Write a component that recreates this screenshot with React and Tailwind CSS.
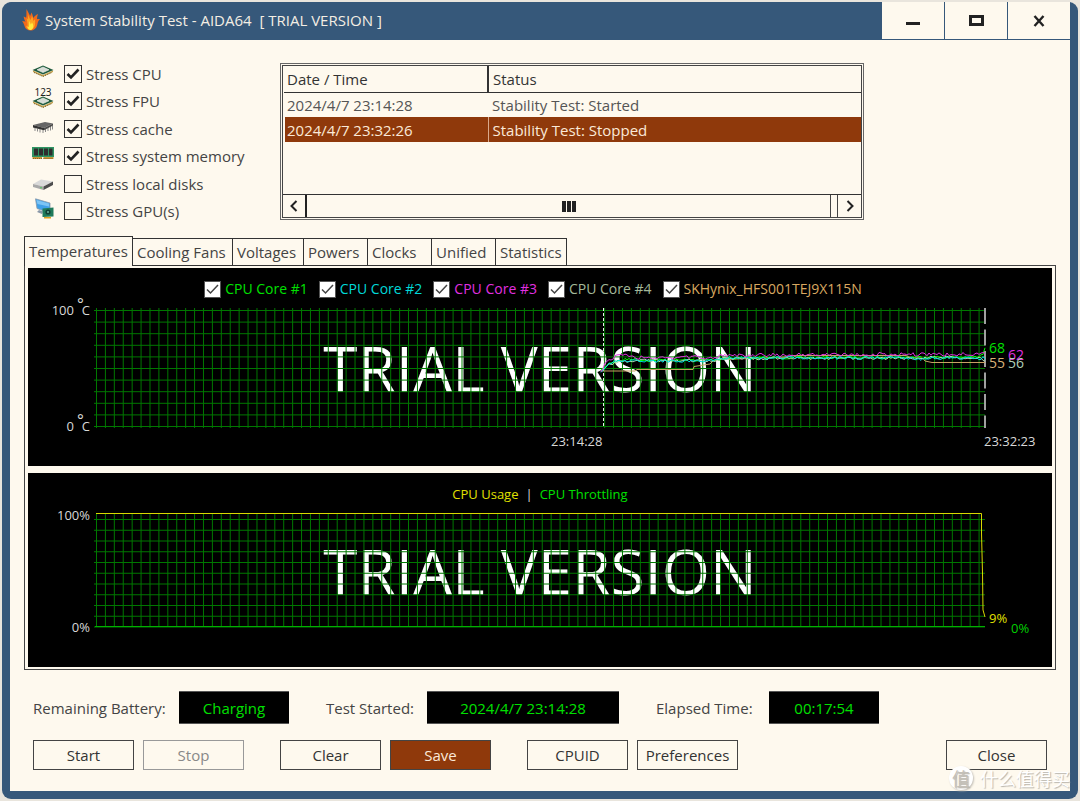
import React, { useState } from 'react';

const stressTests = [
  { id: 'cpu', label: 'Stress CPU', icon: 'cpu', checked: true },
  { id: 'fpu', label: 'Stress FPU', icon: 'fpu', checked: true },
  { id: 'cache', label: 'Stress cache', icon: 'cache', checked: true },
  { id: 'memory', label: 'Stress system memory', icon: 'memory', checked: true },
  { id: 'disks', label: 'Stress local disks', icon: 'disk', checked: false },
  { id: 'gpu', label: 'Stress GPU(s)', icon: 'gpu', checked: false },
];

const events = [
  { time: '2024/4/7 23:14:28', status: 'Stability Test: Started' },
  { time: '2024/4/7 23:32:26', status: 'Stability Test: Stopped' },
];

const tabs = [
  { name: 'Temperatures', width: 'w-[109px]' },
  { name: 'Cooling Fans', width: 'w-[100px]' },
  { name: 'Voltages', width: 'w-[71px]' },
  { name: 'Powers', width: 'w-[64px]' },
  { name: 'Clocks', width: 'w-[64px]' },
  { name: 'Unified', width: 'w-[64px]' },
  { name: 'Statistics', width: 'w-[71px]' },
];

const sensors = [
  { id: 'core1', label: 'CPU Core #1', color: 'text-[#00e000]' },
  { id: 'core2', label: 'CPU Core #2', color: 'text-[#00d8d8]' },
  { id: 'core3', label: 'CPU Core #3', color: 'text-[#e030e0]' },
  { id: 'core4', label: 'CPU Core #4', color: 'text-[#a3b899]' },
  { id: 'ssd', label: 'SKHynix_HFS001TEJ9X115N', color: 'text-[#d8a860]' },
];

// Plot space is 892 x 120, 100 degrees at y = 2.5 and 0 degrees at y = 118.5
const traces = [
  {
    color: '#c8a064', amp: 0, seed: 1,
    points: [[507, 63], [541, 63], [543, 61.5], [599, 61.5], [600, 58.5], [616, 56], [619, 53], [624, 51.5], [656, 50.5], [690, 49], [699, 47.5], [812, 47.5], [815, 49], [829, 50.5], [831, 53], [838, 54.5], [891, 54.5]],
  },
  {
    color: '#00ff00', amp: 1.4, seed: 7,
    points: [[507, 62], [515, 55], [525, 53], [536, 50.5], [546, 52], [622, 52], [630, 50], [885, 49], [889, 46], [891, 40]],
  },
  {
    color: '#a8d8b0', amp: 1.5, seed: 23,
    points: [[507, 65], [514, 56], [525, 54], [545, 52.5], [622, 52.5], [630, 50.5], [887, 49.5], [891, 53]],
  },
  {
    color: '#00e0e0', amp: 1.5, seed: 41,
    points: [[507, 63], [514, 56], [525, 53], [545, 53], [622, 52.5], [630, 50], [820, 50], [824, 52], [830, 50], [891, 50]],
  },
  {
    color: '#e030e0', amp: 2, seed: 59,
    points: [[507, 62], [511, 57], [516, 52], [522, 49], [532, 46], [544, 49.5], [622, 49.5], [630, 47], [891, 46]],
  },
];

const buildPath = ({ points, amp, seed }) => {
  if (!amp) {
    return points.map(([x, y], i) => `${i ? 'L' : 'M'}${x} ${y}`).join(' ');
  }
  let state = seed;
  const noise = () => {
    state = (state * 16807) % 2147483647;
    return (state / 2147483647) * 2 - 1;
  };
  for (let i = 0; i < 5; i++) noise();
  const last = points[points.length - 1];
  const out = [];
  for (let x = points[0][0]; x <= last[0]; x += 2) {
    const i = Math.max(1, points.findIndex((p) => p[0] >= x));
    const [x0, y0] = points[i - 1];
    const [x1, y1] = points[i];
    const y = y0 + ((y1 - y0) * (x - x0)) / (x1 - x0) + noise() * amp;
    out.push(`${out.length ? 'L' : 'M'}${x} ${y.toFixed(1)}`);
  }
  return out.join(' ');
};

const FlameIcon = () => (
  <svg className="w-[18px] h-[22px]" viewBox="0 0 18 22">
    <path fill="#f26a1b" d="M4.500 0c1.300 2.600 2.600 4.600 3.600 7C8.600 5.800 9 4.800 9.400 3.600 10.400 5.200 11 7 11.200 9c1.300-1.600 2.600-3 4.800-4-.8 2.200-.9 3.600-1 5.200.9-.2 1.900-.2 3 0-2.200 1.600-2.200 3.800-2.800 6-.9 3.200-3.400 5.300-6.400 5.300-3.300 0-5.600-1.600-6.300-4.500C2 15 1.400 13.500 0 12.200c1.400-.1 2.400 0 3.500.5C2.500 11 1.800 9.300 1.600 7.500c1 .3 1.700.7 2.500 1.300C4.800 6 4.200 3 4.500 0z" />
    <path fill="#ffa51f" d="M6 5c.6 2.500 1.600 4 2.400 6 .8-1.200 1.200-2.500 1.600-4 1 1.800 1 3.500 1.200 5 .8-.6 1.300-1.300 2-2-.2 2.500.3 4.500-.4 6.500-.7 2.600-2.300 4-4.300 4.200C6 20.800 4.300 19 4 16.500c.6.300 1 .5 1.500 1C6 14 4.800 11 4.600 9c.6.500 1 1 1.400 1.600C6.200 8.500 5.800 7 6 5z" />
    <path fill="#ffe83d" d="M7.500 12c.6 1.200.8 2.300 1.200 3.400.6-.6 1-1.300 1.200-2.200.8 1.500 1.600 2.600 1.400 4.300-.2 1.800-1.300 3.500-2.800 3.500-1.700 0-3-1.800-3-3.500.3.200.9.400 1.300.8.500-2 .200-4 .7-6.300z" />
  </svg>
);

const Chip = () => (
  <>
    <path fill="#c9a24a" d="M1 9.500 11 14l10-4.500V11l-10 4.500L1 11z" />
    <path stroke="#6b5a2a" strokeWidth="1" strokeDasharray="1 1" d="M2 11.500 11 15.500l9-4" fill="none" />
    <path fill="#1f5a3c" d="M11 4.500 21.500 9 11 13.500.5 9z" />
    <path fill="#d7dcd6" stroke="#f4f6f2" strokeWidth=".6" d="M11 6 17 8.800 11 11.500 5 8.800z" />
  </>
);

const DeviceIcon = ({ kind }) => {
  if (kind === 'fpu') {
    return (
      <svg className="w-[22px] h-[28px] shrink-0" viewBox="0 -7 22 28">
        <Chip />
        <text x="11" y="4" textAnchor="middle" fontSize="10" fontFamily="Noto Sans, sans-serif" fill="#222">123</text>
      </svg>
    );
  }
  return (
    <svg className="w-[22px] h-[22px] shrink-0" viewBox="0 0 22 22">
      {kind === 'cpu' && <Chip />}
      {kind === 'cache' && (
        <>
          <path stroke="#8a8a8a" strokeWidth="1" fill="none" d="M3 12v3M5.500 12.500v3M8 13v3.500M11 13v4M13.500 12v4M16 11v4M18.500 10v4.500M20.500 9.500v4" />
          <path fill="#666" d="M1 9 13 6l8 1.500-9 4.500z" />
          <path fill="#333" d="M1 9l11 3v2.200L1 11.500z" />
          <path fill="#4c4c4c" d="M12 12l9-4.500v2L12 14.200z" />
        </>
      )}
      {kind === 'memory' && (
        <>
          <rect x="0" y="4" width="22" height="10" fill="#2f9463" />
          <path fill="#2e2e2e" d="M2 5.500h4v7H2zM7 5.500h4v7H7zM12 5.500h4v7h-4zM17 5.500h3.500v7H17z" />
          <path fill="#c8973a" d="M.5 14H10v2H.5zM11.500 14H21.500v2h-10z" />
          <path stroke="#8a6420" strokeWidth="1" strokeDasharray="1 1" d="M1 15.500h9M11.500 15.500H21" />
        </>
      )}
      {kind === 'disk' && (
        <>
          <path fill="#d9d9d9" d="M1 13 9 8.500l12 2-9.500 5z" />
          <path fill="#a8a8a8" d="M1 13l10.500 2.500v3.500L1 16z" />
          <path fill="#4d4d4d" d="M11.500 15.500 21 10.500V14l-9.500 5z" />
          <circle cx="9" cy="16.800" r="0.800" fill="#3fd04a" />
        </>
      )}
      {kind === 'gpu' && (
        <>
          <path fill="#3fa0e8" stroke="#8a98a8" strokeWidth=".8" d="M3.500.8 18 5v10L5 10.500z" />
          <path fill="#7cc4f5" d="M4.500 2 17 5.600v3L5.500 6z" />
          <path fill="#8a98a8" d="m7 12 4 1.500-1 2.500-5-2z" />
          <path fill="#1f7a5a" d="M10.500 10.500 21.500 9.500v9l-11 .5z" />
          <circle cx="16" cy="14" r="2.600" fill="#123f34" />
          <circle cx="16" cy="14" r="1" fill="#6fb59c" />
          <path fill="#e0a020" d="M12 19h7v1.500h-7z" />
        </>
      )}
    </svg>
  );
};

const StressOption = ({ test }) => (
  <label htmlFor={test.id} className="flex items-center">
    <span className="mb-1 h-[22px] flex items-center">
      <DeviceIcon kind={test.icon} />
    </span>
    <span className="ml-[10px] mr-1 grid">
      <input
        id={test.id}
        type="checkbox"
        defaultChecked={test.checked}
        className="peer appearance-none [grid-area:1/1] w-[18px] h-[18px] border border-[#333]"
      />
      <svg className="[grid-area:1/1] w-[18px] h-[18px] hidden peer-checked:block pointer-events-none" viewBox="0 0 18 18">
        <path d="M3.500 9 7 12.500l7.500-8" fill="none" stroke="#222" strokeWidth="2.600" />
      </svg>
    </span>
    {test.label}
  </label>
);

const EventLog = () => (
  <div className="w-[584px] h-[157px] border border-[#666] p-px text-[#444]">
    <div className="h-full flex flex-col border border-[#444]">
      <table className="w-full table-fixed border-collapse">
        <thead>
          <tr className="h-[26px] border-b border-[#333] text-[#333]">
            <th className="w-[204px] border-r-2 border-[#333] pl-[3px] text-left font-normal">Date / Time</th>
            <th className="pl-1 text-left font-normal">Status</th>
          </tr>
        </thead>
        <tbody>
          {events.map((event, i) => (
            <tr key={event.time} className={i === 1 ? 'h-[25px] bg-[#8f390b] text-[#fbe9d8]' : 'h-[25px] text-[#555]'}>
              <td className={i === 1 ? 'border-r border-[#d9a98c] border-l-2 border-l-[#fef9ee] pl-[2px]' : 'pl-[3px]'}>{event.time}</td>
              <td className="pl-1">{event.status}</td>
            </tr>
          ))}
        </tbody>
      </table>
      <div className="mt-auto h-[23px] flex border-t border-[#333]">
        <button aria-label="Scroll left" className="w-6 flex items-center justify-center border-r-2 border-[#222]">
          <svg className="w-3 h-3" viewBox="0 0 12 12">
            <path d="M8.500 1 3.500 6l5 5" fill="none" stroke="#222" strokeWidth="2" />
          </svg>
        </button>
        <div className="flex-1 mr-[6px] flex items-center justify-center gap-px border-r border-[#444]">
          <span className="w-1 h-[11px] bg-[#222]" />
          <span className="w-1 h-[11px] bg-[#222]" />
          <span className="w-1 h-[11px] bg-[#222]" />
        </div>
        <button aria-label="Scroll right" className="w-6 flex items-center justify-center border-l border-[#444]">
          <svg className="w-3 h-3" viewBox="0 0 12 12">
            <path d="m3.500 1 5 5-5 5" fill="none" stroke="#222" strokeWidth="2" />
          </svg>
        </button>
      </div>
    </div>
  </div>
);

const GridLines = ({ height, top, rowStep, bottom }) => {
  const columns = Array.from({ length: 100 }, (_, i) => 2.5 + i * 8.915);
  const rows = Array.from({ length: 11 }, (_, i) => top + i * rowStep);
  return (
    <g stroke="#007800" strokeWidth="1">
      {columns.map((x) => <path key={x} d={`M${x} 0V${bottom || height}`} />)}
      {rows.map((y) => <path key={y} d={`M0 ${y}H891`} />)}
    </g>
  );
};

const Watermark = () => (
  <span className="absolute inset-0 flex items-center justify-center whitespace-nowrap text-[62px] text-white">
    TRIAL VERSION
  </span>
);

const Degrees = ({ value }) => (
  <span className="h-1 flex items-center">
    {value}
    <span className="ml-[3px] -mr-[2px] mb-3 text-[16px]">°</span>
    C
  </span>
);

const TemperatureChart = () => (
  <section className="bg-black text-[13px] leading-5 text-[#d8d8d8]">
    <div className="h-10 pt-[2px] pr-[14px] flex items-center justify-center gap-[11px] text-[14px]">
      {sensors.map((sensor) => (
        <label key={sensor.id} htmlFor={sensor.id} className={`flex items-center gap-1 ${sensor.color}`}>
          <span className="grid">
            <input
              id={sensor.id}
              type="checkbox"
              defaultChecked
              className="peer appearance-none [grid-area:1/1] w-[17px] h-[17px] bg-white border border-[#555]"
            />
            <svg className="[grid-area:1/1] w-[17px] h-[17px] hidden peer-checked:block pointer-events-none" viewBox="0 0 17 17">
              <path d="M3 8.500 6.500 12l7.500-8" fill="none" stroke="#444" strokeWidth="1.500" />
            </svg>
          </span>
          {sensor.label}
        </label>
      ))}
    </div>
    <div className="grid grid-cols-[66px_1fr_66px]">
      <div className="pr-1 flex flex-col items-end justify-between">
        <Degrees value={100} />
        <Degrees value={0} />
      </div>
      <div className="relative h-[120px]">
        <Watermark />
        <svg className="relative block w-full h-full" viewBox="0 0 892 120" preserveAspectRatio="none">
          <GridLines height={120} top={2.5} rowStep={11.6} />
          <path d="M509.500 0V118" stroke="#e8f0e8" strokeDasharray="3 2" />
          <path d="M891 0V120" stroke="#a0a0a0" strokeWidth="2" strokeDasharray="16 5.500" />
          {traces.map((trace) => (
            <path key={trace.color} d={buildPath(trace)} fill="none" stroke={trace.color} strokeWidth="1" />
          ))}
        </svg>
      </div>
      <div className="relative text-[14px] leading-none">
        <span className="absolute left-[3px] top-[33px] text-[#00e000]">68</span>
        <span className="absolute left-[22px] top-[40px] text-[#e030e0]">62</span>
        <span className="absolute left-[3px] top-[48px] text-[#d8b078]">55</span>
        <span className="absolute left-[22px] top-[48px] text-[#b0d0b8]">56</span>
      </div>
      <div className="h-[38px]" />
      <div className="pt-[3px]">
        <div className="w-[57%] text-right">23:14:28</div>
      </div>
      <div className="-ml-[2px] pt-[3px]">23:32:23</div>
    </div>
  </section>
);

const UsageChart = () => (
  <section className="bg-black text-[13px] leading-5 text-[#d8d8d8]">
    <div className="h-10 pt-[2px] flex items-center justify-center gap-[7px] text-[13px]">
      <span className="text-[#e0e000]">CPU Usage</span>
      <span>|</span>
      <span className="text-[#00e000]">CPU Throttling</span>
    </div>
    <div className="grid grid-cols-[66px_1fr_66px] pb-[38px]">
      <div className="pr-1 flex flex-col items-end justify-between">
        <span className="h-1 flex items-center">100%</span>
        <span className="h-1 flex items-center">0%</span>
      </div>
      <div className="relative h-[116px]">
        <Watermark />
        <svg className="relative block w-full h-full" viewBox="0 0 892 116" preserveAspectRatio="none">
          <GridLines height={116} top={6.5} rowStep={10.75} bottom={114} />
          <path d="M1 113.500H891" stroke="#00b000" />
          <path d="M2 .5H887.500V20L888.500 60 889 97 891 104" fill="none" stroke="#d8d800" strokeWidth="1" />
        </svg>
      </div>
      <div className="relative">
        <span className="absolute left-[3px] top-[95px] text-[#e0e000]">9%</span>
        <span className="absolute left-[25px] top-[105px] text-[#00d000]">0%</span>
      </div>
    </div>
  </section>
);

const buttonClass = 'w-[101px] h-[30px] border border-[#444] text-[#333] disabled:border-[#999] disabled:text-[#888]';
const outputClass = 'h-[33px] flex items-center justify-center bg-black text-[#00e000] border-y border-[#555]';

const App = () => {
  const [activeTab, setActiveTab] = useState('Temperatures');

  return (
    <div className="min-h-screen p-[2px] bg-[#e9e5dd] font-['Open_Sans',sans-serif] text-[15px] leading-5 text-[#444]">
      <div className="relative rounded-[9px] border-x-8 border-b-8 border-[#36587a] bg-[#36587a]">
        <header className="h-[38px] flex text-[#f4eee4]">
          <div className="flex items-center pl-3 pb-[2px] gap-[5px]">
            <FlameIcon />
            <h1 className="whitespace-pre">System Stability Test - AIDA64  [ TRIAL VERSION ]</h1>
          </div>
          <div className="ml-auto mb-px flex gap-px">
            <button aria-label="Minimize" className="w-[62px] flex items-center justify-center bg-[#fef9ee]">
              <span className="mt-[5px] w-[14px] h-[3px] bg-[#222]" />
            </button>
            <button aria-label="Maximize" className="w-[62px] flex items-center justify-center bg-[#fef9ee]">
              <span className="w-[15px] h-[11px] border-[3px] border-[#222]" />
            </button>
            <button aria-label="Close window" className="w-[62px] flex items-center justify-center bg-[#fef9ee]">
              <svg className="w-3 h-3" viewBox="0 0 12 12">
                <path d="M1.500 1 10.500 11M10.500 1 1.500 11" stroke="#222" strokeWidth="2.400" />
              </svg>
            </button>
          </div>
        </header>

        <main className="bg-[#fef9ee]">
          <div className="flex pt-5 pl-[22px]">
            <div className="w-[248px] h-[165px] grid grid-rows-6">
              {stressTests.map((test) => <StressOption key={test.id} test={test} />)}
            </div>
            <div className="pt-[3px]">
              <EventLog />
            </div>
          </div>

          <div className="mt-[11px] px-[14px]">
            <div role="tablist" className="flex items-end">
              {tabs.map(({ name, width }) => (
                <button
                  key={name}
                  role="tab"
                  aria-selected={activeTab === name}
                  onClick={() => setActiveTab(name)}
                  className={`${width} relative pl-1 text-left border-t border-r first:border-l border-[#333] bg-[#fef9ee] whitespace-nowrap ${
                    activeTab === name ? 'h-[30px] pb-[2px]' : 'h-[28px] border-b'
                  }`}
                >
                  {name}
                </button>
              ))}
            </div>
            <div className="-mt-px border border-[#444] px-[3px] py-[2px] flex flex-col gap-[7px]">
              <TemperatureChart />
              <UsageChart />
            </div>
          </div>

          <div className="mt-[21px] pl-[23px] flex items-center">
            <label htmlFor="battery" className="w-[146px]">Remaining Battery:</label>
            <output id="battery" className={`${outputClass} w-[110px]`}>Charging</output>
            <label htmlFor="started" className="ml-[37px] w-[101px]">Test Started:</label>
            <output id="started" className={`${outputClass} w-[192px]`}>2024/4/7 23:14:28</output>
            <label htmlFor="elapsed" className="ml-[37px] w-[113px]">Elapsed Time:</label>
            <output id="elapsed" className={`${outputClass} w-[110px]`}>00:17:54</output>
          </div>

          <div className="mt-4 px-[23px] pb-[21px] flex gap-9">
            <div className="flex gap-[9px]">
              <button className={buttonClass}>Start</button>
              <button className={buttonClass} disabled>Stop</button>
            </div>
            <div className="flex gap-[9px]">
              <button className={buttonClass}>Clear</button>
              <button className="w-[101px] h-[30px] border border-[#444] bg-[#8f390b] text-[#fbe9d8]">Save</button>
            </div>
            <div className="flex gap-[9px]">
              <button className={buttonClass}>CPUID</button>
              <button className={buttonClass}>Preferences</button>
            </div>
            <button className={`${buttonClass} ml-auto`}>Close</button>
          </div>
        </main>

        <div className="absolute right-0 bottom-[1px] flex items-center gap-[7px] font-['Noto_Sans_CJK_SC',sans-serif] text-[18px] leading-6 text-white [text-shadow:1px_1px_1px_#b8b4ac]">
          <span className="w-6 h-6 rounded-full bg-white text-center text-[#c4c0b8] shadow-[1px_1px_2px_#c4c0b8]">值</span>
          <span>什么值得买</span>
        </div>
      </div>
    </div>
  );
};

export default App;
